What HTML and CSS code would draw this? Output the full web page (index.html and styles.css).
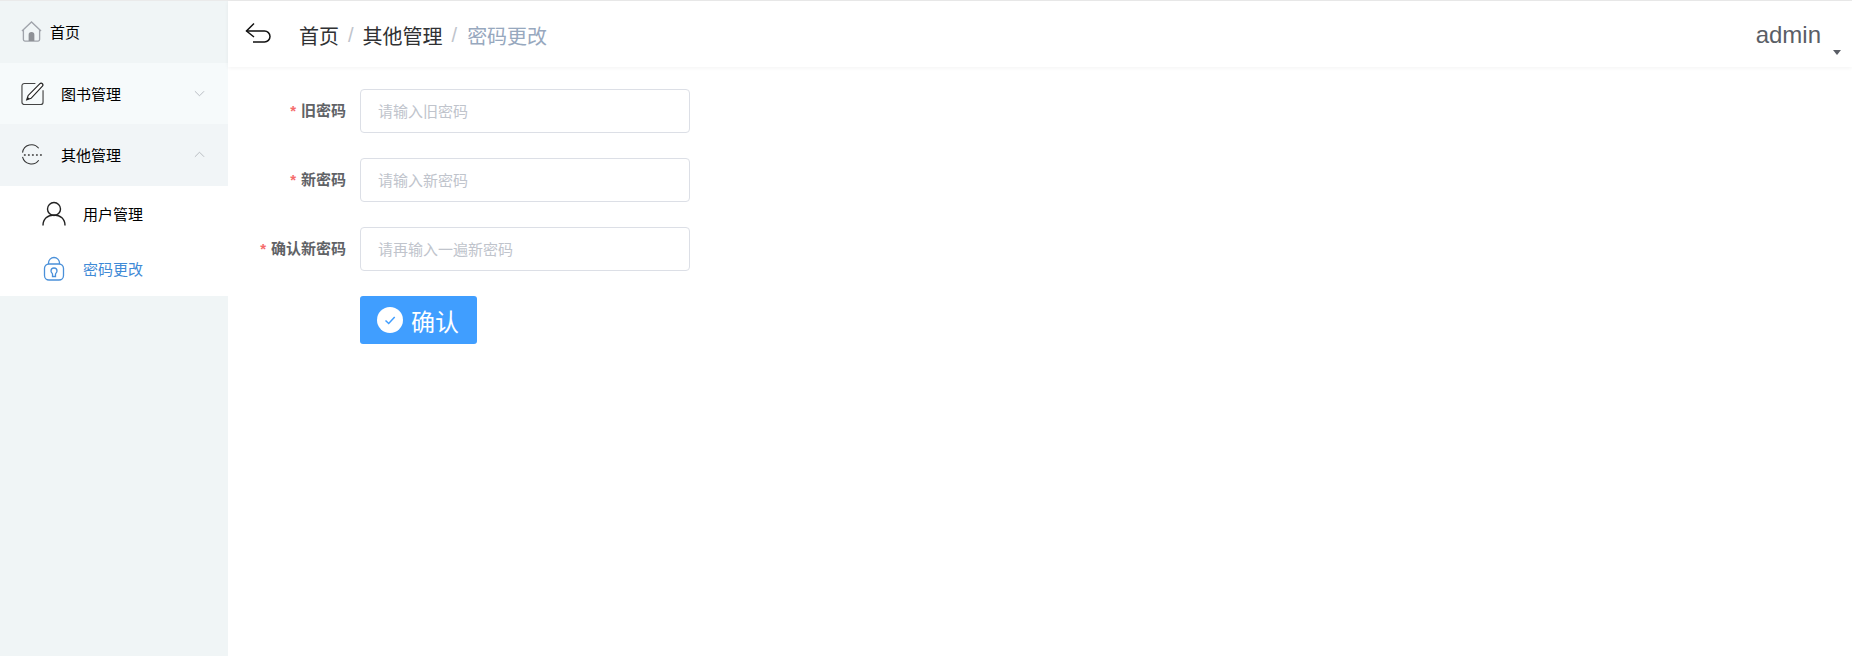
FILE: index.html
```html
<!DOCTYPE html>
<html lang="zh-CN">
<head>
    <meta charset="UTF-8">
    <title>密码更改</title>
    <link rel="stylesheet" href="styles.css">
</head>
<body>
    <div class="layout">
        <aside class="sidebar">
            <div class="menu-item home">
                <svg class="icon-home" viewBox="0 0 22 22" fill="none">
                    <path d="M1 10.500 11 1l10 9.500" stroke="#a0a4ab" stroke-width="1.400"/>
                    <path d="M2.500 9.500v10a1.500 1.500 0 0 0 1.500 1.500h14a1.500 1.500 0 0 0 1.500-1.500v-10" stroke="#a0a4ab" stroke-width="1.400"/>
                    <path d="M8 21v-6.500a3 3 0 0 1 6 0V21z" fill="#8e9196"/>
                </svg>
                <span>首页</span>
            </div>
            <div class="menu-item light">
                <svg class="icon-main" viewBox="0 0 24 24" fill="none">
                    <path d="M15 1H3.500A2.500 2.500 0 0 0 1 3.500v17A2.500 2.500 0 0 0 3.500 23h17a2.500 2.500 0 0 0 2.500-2.500V8" stroke="#444" stroke-width="1.200"/>
                    <path d="M6 18l1.500-4.500L19.500 1.500c1-1 2-1 2.800-.2s.8 1.800-.2 2.800L10.500 16.500z" fill="#fff" stroke="#222" stroke-width="1.200"/>
                    <path d="M6 18l1-3 2 2z" fill="#222"/>
                </svg>
                <span class="menu-text">图书管理</span>
                <svg class="chevron" viewBox="0 0 12 7" fill="none"><path d="M1 1l5 5 5-5"/></svg>
            </div>
            <div class="menu-item">
                <svg class="icon-main" viewBox="0 0 24 24" fill="none">
                    <path d="M1.600 10.500A9.500 9.500 0 0 1 18.500 6M1.600 15A9.500 9.500 0 0 0 18.500 18.500" stroke="#333" stroke-width="1.100"/>
                    <circle cx="4" cy="13" r="1.100" fill="#555"/>
                    <circle cx="8.200" cy="13" r="1.100" fill="#555"/>
                    <circle cx="12.400" cy="13" r="1.100" fill="#555"/>
                    <circle cx="16.600" cy="13" r="1.100" fill="#555"/>
                    <circle cx="20.800" cy="13" r="1.100" fill="#555"/>
                </svg>
                <span class="menu-text">其他管理</span>
                <svg class="chevron" viewBox="0 0 12 7" fill="none"><path d="M1 6l5-5 5 5"/></svg>
            </div>
            <div class="submenu">
                <div class="sub-item">
                    <svg class="icon-sub" viewBox="0 0 24 24" fill="none" stroke="#222" stroke-width="1.400">
                        <circle cx="12" cy="7.500" r="6.500"/>
                        <path d="M1 24c0-6.500 4.500-10.500 11-10.500S23 17.500 23 24"/>
                    </svg>
                    <span>用户管理</span>
                </div>
                <div class="sub-item active">
                    <svg class="icon-sub" viewBox="0 0 24 24" fill="none" stroke="#4a90d9" stroke-width="1.300">
                        <path d="M6.500 7.500V6.500a5.500 5.500 0 0 1 11 0v1"/>
                        <rect x="2.500" y="7.500" width="19" height="16" rx="4.500"/>
                        <path d="M10.500 17.500c0-.8-1.500-1.200-1.500-3a3 3 0 0 1 6 0c0 1.800-1.500 2.200-1.500 3v2.500h-3z"/>
                    </svg>
                    <span>密码更改</span>
                </div>
            </div>
        </aside>
        <div class="main">
            <header class="topbar">
                <svg class="back" viewBox="0 0 26 22" fill="none" stroke="#111" stroke-width="1.500">
                    <path d="M9 1.500 1.500 9 9 15"/>
                    <path d="M1.500 9h18a5 5 0 0 1 0 11H8"/>
                </svg>
                <nav class="crumbs">
                    <span>首页</span>
                    <i>/</i>
                    <span>其他管理</span>
                    <i>/</i>
                    <span class="current">密码更改</span>
                </nav>
                <div class="user">
                    <span>admin</span>
                    <b class="caret"></b>
                </div>
            </header>
            <form class="pwd-form">
                <div class="form-row">
                    <label class="required">旧密码</label>
                    <input type="password" placeholder="请输入旧密码">
                </div>
                <div class="form-row">
                    <label class="required">新密码</label>
                    <input type="password" placeholder="请输入新密码">
                </div>
                <div class="form-row">
                    <label class="required">确认新密码</label>
                    <input type="password" placeholder="请再输入一遍新密码">
                </div>
                <div class="form-row">
                    <label></label>
                    <button type="button" class="btn-ok">
                        <svg viewBox="0 0 26 26">
                            <circle cx="13" cy="13" r="13" fill="#fff"/>
                            <path d="M8.500 13.500l3.200 3 6-6.500" fill="none" stroke="#409eff" stroke-width="1.500"/>
                        </svg>
                        确认
                    </button>
                </div>
            </form>
        </div>
    </div>
</body>
</html>
```

FILE: styles.css
```css
* {
    box-sizing: border-box;
}
html, body {
    height: 100%;
}
body {
    margin: 0;
    font-family: "Liberation Sans", "Noto Sans CJK SC", sans-serif;
    color: #000;
    background: #fff;
    overflow: hidden;
}
.layout {
    display: flex;
    height: 656px;
    border-top: 1px solid #eaeaea;
}
.sidebar {
    width: 228px;
    flex-shrink: 0;
    background: #f0f5f6;
}
.menu-item {
    display: flex;
    align-items: center;
    height: 62px;
    padding-left: 21px;
    padding-bottom: 2px;
    font-size: 15px;
    background: #f1f5f7;
}
.menu-item.home {
    background: #f0f5f6;
}
.menu-item.light {
    height: 61px;
    padding-bottom: 0;
    background: #f6fafb;
}
.icon-home {
    width: 21px;
    height: 21px;
    margin-right: 8px;
}
.icon-main {
    width: 23px;
    height: 24px;
    flex-shrink: 0;
}
.menu-text {
    margin-left: 17px;
}
.chevron {
    width: 11px;
    height: 7px;
    margin-left: auto;
    margin-right: 23px;
}
.chevron path {
    stroke: #b4b8bd;
    stroke-width: 1;
}
.submenu {
    background: #fff;
}
.sub-item {
    display: flex;
    align-items: center;
    height: 55px;
    padding-left: 42px;
    font-size: 15px;
}
.sub-item span {
    margin-left: 17px;
}
.sub-item.active {
    color: #3f8ad6;
}
.icon-sub {
    width: 24px;
    height: 25px;
}
.main {
    flex: 1;
    min-width: 0;
}
.topbar {
    display: flex;
    align-items: center;
    height: 66px;
    padding-left: 17px;
    padding-right: 11px;
    padding-top: 2px;
    box-shadow: 0 1px 4px rgba(0, 0, 0, 0.05);
}
.back {
    width: 26px;
    height: 22px;
    margin-bottom: 4px;
}
.crumbs {
    display: flex;
    align-items: center;
    margin-left: 28px;
    font-size: 20px;
    color: #303133;
}
.crumbs i {
    font-style: normal;
    color: #c0c4cc;
    margin: 0 9px;
}
.crumbs i:last-of-type {
    margin-right: 10px;
}
.crumbs .current {
    color: #97a8be;
}
.user {
    margin-left: auto;
    display: flex;
    align-items: flex-end;
    font-size: 24px;
    color: #5a5e66;
}
.caret {
    width: 0;
    height: 0;
    margin-left: 12px;
    margin-bottom: -6px;
    border-left: 4px solid transparent;
    border-right: 4px solid transparent;
    border-top: 5px solid #5a5e66;
}
.pwd-form {
    padding-top: 22px;
}
.form-row {
    display: flex;
    align-items: center;
    margin-bottom: 25px;
}
.form-row label {
    width: 118px;
    margin-right: 14px;
    padding-bottom: 3px;
    text-align: right;
    font-size: 15px;
    font-weight: bold;
    color: #606266;
}
.required::before {
    content: "*";
    color: #f56c6c;
    margin-right: 5px;
}
.form-row input {
    width: 330px;
    height: 44px;
    padding: 0 17px;
    border: 1px solid #dcdfe6;
    border-radius: 4px;
    font-family: inherit;
    font-size: 15px;
    outline: none;
}
.form-row input::placeholder {
    color: #c0c4cc;
}
.btn-ok {
    display: flex;
    align-items: center;
    width: 117px;
    height: 48px;
    padding: 0 0 0 17px;
    border: none;
    border-radius: 3px;
    background: #409eff;
    color: #fff;
    font-family: inherit;
    font-size: 24px;
    cursor: pointer;
}
.btn-ok svg {
    width: 26px;
    height: 26px;
    margin-right: 8px;
}
```
